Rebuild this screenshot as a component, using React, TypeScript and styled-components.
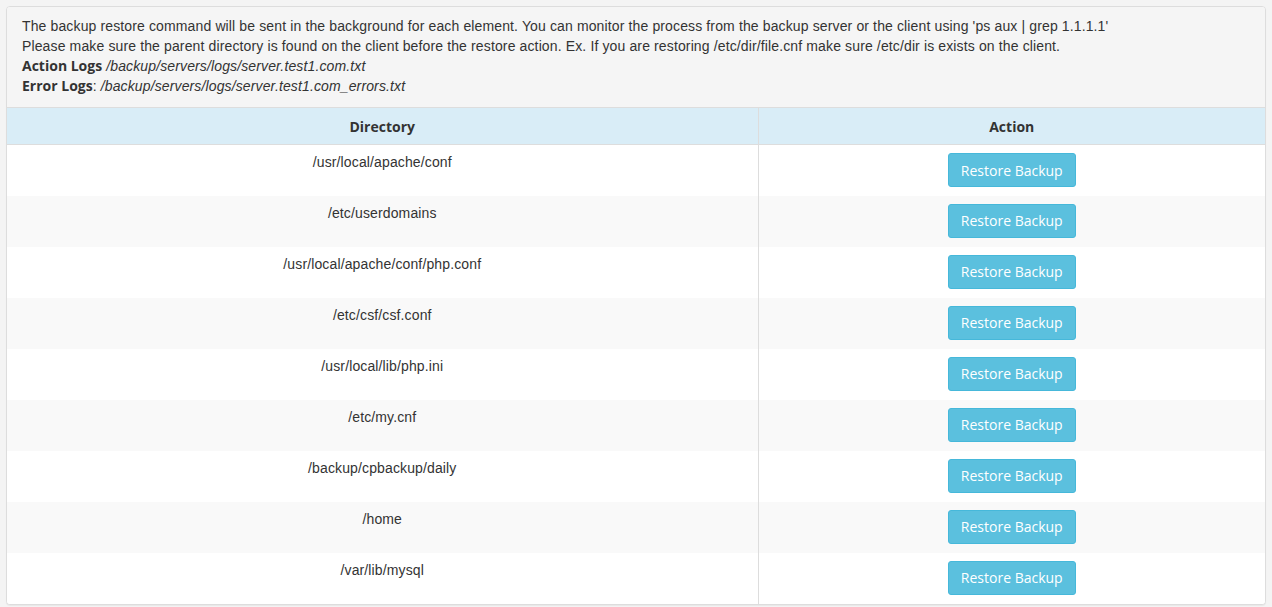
import React from 'react';
import styled, { createGlobalStyle } from 'styled-components';

const GlobalStyle = createGlobalStyle`
    html, body {
        margin: 0;
        padding: 0;
        background: #f4f4f4;
    }
    body {
        font-family: "Liberation Sans", Arial, sans-serif;
        font-size: 14px;
        letter-spacing: 0.13px;
        color: #333;
    }
`;

const Page = styled.div`
    padding: 6px;
`;

const Panel = styled.div`
    background: #fff;
    border: 1px solid #ddd;
    border-radius: 4px;
    overflow: hidden;
    box-shadow: 0 1px 1px rgba(0, 0, 0, 0.05);
`;

const Notice = styled.div`
    background: #f5f5f5;
    padding: 9px 15px 11px;
    line-height: 20px;
    border-bottom: 1px solid #ddd;
`;

const Line = styled.div`
    height: 20px;
    white-space: nowrap;
`;

const Label = styled.strong`
    font-family: "Open Sans", "Liberation Sans", sans-serif;
    font-weight: 700;
    letter-spacing: 0;
`;

const Path = styled.em`
    font-style: italic;
`;

const Table = styled.table`
    width: 100%;
    border-collapse: collapse;
`;

const HeadCell = styled.th`
    background: #d9edf7;
    font-family: "Open Sans", "Liberation Sans", sans-serif;
    font-weight: 700;
    font-size: 14px;
    letter-spacing: 0;
    height: 36px;
    padding: 0 8px;
    text-align: center;
    border-bottom: 1px solid #ddd;
    & + & {
        border-left: 1px solid #ddd;
    }
`;

const Row = styled.tr<{ $striped: boolean }>`
    background: ${({ $striped }) => ($striped ? '#f9f9f9' : '#fff')};
    & + & td {
        border-top: 1px solid #ddd;
    }
`;

const Cell = styled.td<{ $narrow?: boolean }>`
    height: 51px;
    box-sizing: border-box;
    padding: 8px;
    vertical-align: top;
    text-align: center;
    line-height: 18px;
    width: ${({ $narrow }) => ($narrow ? '507px' : 'auto')};
    & + & {
        border-left: 1px solid #ddd;
    }
`;

const RestoreButton = styled.button`
    font-family: "Open Sans", "Liberation Sans", sans-serif;
    font-size: 14px;
    letter-spacing: 0;
    color: #fff;
    background: #5bc0de;
    border: 1px solid #46b8da;
    border-radius: 3px;
    height: 34px;
    padding: 0 12px;
    cursor: pointer;
`;

const directories = [
    '/usr/local/apache/conf',
    '/etc/userdomains',
    '/usr/local/apache/conf/php.conf',
    '/etc/csf/csf.conf',
    '/usr/local/lib/php.ini',
    '/etc/my.cnf',
    '/backup/cpbackup/daily',
    '/home',
    '/var/lib/mysql',
];

export default function App() {
    return (
        <Page>
            <GlobalStyle />
            <Panel>
                <Notice>
                    <Line>
                        The backup restore command will be sent in the background for each element. You can monitor
                        the process from the backup server or the client using 'ps aux | grep 1.1.1.1'
                    </Line>
                    <Line>
                        Please make sure the parent directory is found on the client before the restore action. Ex. If
                        you are restoring /etc/dir/file.cnf make sure /etc/dir is exists on the client.
                    </Line>
                    <Line>
                        <Label>Action Logs</Label> <Path>/backup/servers/logs/server.test1.com.txt</Path>
                    </Line>
                    <Line>
                        <Label>Error Logs</Label>: <Path>/backup/servers/logs/server.test1.com_errors.txt</Path>
                    </Line>
                </Notice>
                <Table>
                    <thead>
                        <tr>
                            <HeadCell>Directory</HeadCell>
                            <HeadCell>Action</HeadCell>
                        </tr>
                    </thead>
                    <tbody>
                        {directories.map((dir, i) => (
                            <Row key={dir} $striped={i % 2 === 1}>
                                <Cell>{dir}</Cell>
                                <Cell $narrow>
                                    <RestoreButton type="button">Restore Backup</RestoreButton>
                                </Cell>
                            </Row>
                        ))}
                    </tbody>
                </Table>
            </Panel>
        </Page>
    );
}
